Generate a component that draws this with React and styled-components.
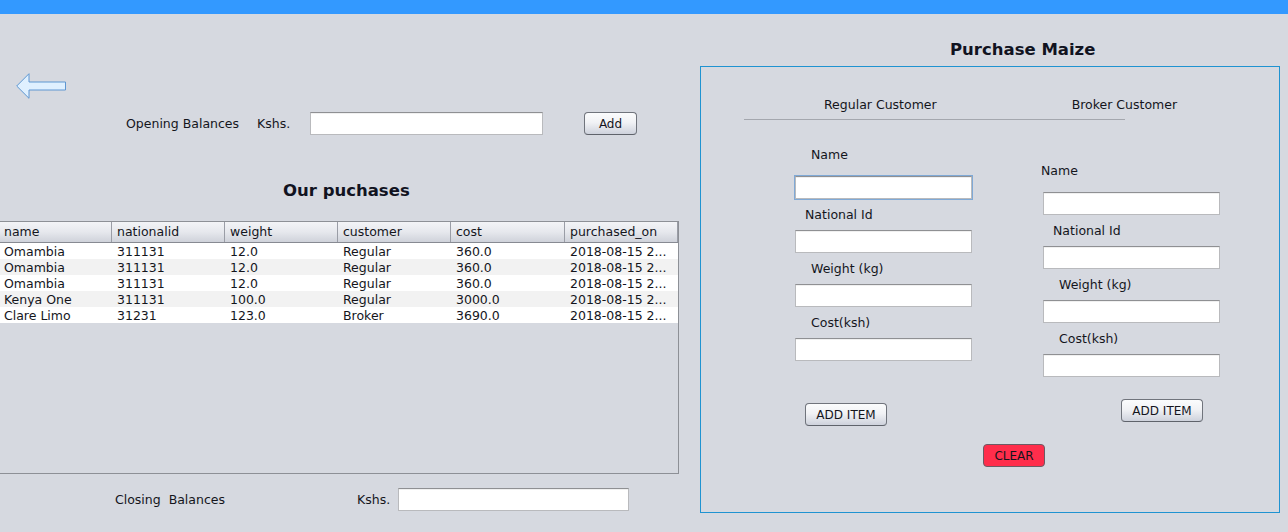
import React from 'react';
import styled, { createGlobalStyle } from 'styled-components';

const GlobalStyle = createGlobalStyle`
  html, body {
    margin: 0;
    height: 100%;
    overflow: hidden;
    background: #d6d9e0;
    font-family: "DejaVu Sans", sans-serif;
    font-size: 12.5px;
    color: #14151c;
  }
`;

const TopBar = styled.div`
  height: 14px;
  background: #3399ff;
`;

const Page = styled.div`
  display: flex;
  width: 1288px;
  height: 518px;
  overflow: hidden;
`;

const LeftColumn = styled.div`
  width: 700px;
  flex: none;
`;

const RightColumn = styled.div`
  width: 580px;
  flex: none;
`;

const BackArrow = styled.svg`
  display: block;
  width: 50px;
  height: 26px;
  margin: 59px 0 13px 16px;
`;

const BalanceRow = styled.div`
  display: flex;
  align-items: center;
  height: 23px;
  padding-left: ${(p) => p.$indent}px;
`;

const Text = styled.span`
  width: ${(p) => p.$width}px;
  flex: none;
  white-space: nowrap;
`;

const TextInput = styled.input`
  display: block;
  box-sizing: border-box;
  width: ${(p) => p.$width || 177}px;
  height: 23px;
  flex: none;
  padding: 0;
  background: #fff;
  border: 1px solid #b9babd;
  border-top-color: #8f9093;
  border-radius: 0;
  outline: ${(p) => (p.$focused ? '1px solid #7fa9d6' : 'none')};
  outline-offset: 0;
  box-shadow: inset 0 1px 0 #f0f0f0;
`;

const Button = styled.button`
  display: block;
  box-sizing: border-box;
  width: ${(p) => p.$width}px;
  height: 23px;
  flex: none;
  padding: 0;
  border: 1px solid #70747c;
  border-bottom-color: #5f636b;
  border-radius: 4px;
  background: linear-gradient(#fbfcfd, #f1f2f5 45%, #ced2dc);
  font: inherit;
  font-size: 12px;
  color: #14151c;
`;

const AddButton = styled(Button)`
  margin-left: 41px;
`;

const ItemButton = styled(Button)`
  margin: ${(p) => p.$top}px 0 0 ${(p) => p.$left}px;
`;

const ClearButton = styled(Button)`
  margin: 18px 0 0 282px;
  background: #ff2d4b;
  border-color: #6d5a64;
`;

const Heading = styled.h2`
  margin: 0;
  font-size: 16.5px;
  line-height: 20px;
  font-weight: bold;
  color: #11131f;
  white-space: nowrap;
`;

const TableHeading = styled(Heading)`
  margin: 46px 0 20px 283px;
`;

const PanelHeading = styled(Heading)`
  margin: 26px 0 6px 250px;
`;

const TableBox = styled.div`
  box-sizing: border-box;
  width: 680px;
  height: 253px;
  margin: 0 0 14px -1px;
  border: 1px solid #8d9096;
`;

const columns = '112px 113px 113px 113px 114px 113px';

const HeaderRow = styled.div`
  display: grid;
  grid-template-columns: ${columns};
  height: 20px;
  border-bottom: 1px solid #878a92;
  background: linear-gradient(#f3f4f7, #e6e8ed 50%, #cfd2da);
`;

const HeaderCell = styled.div`
  padding-left: 5px;
  line-height: 19px;
  border-right: 1px solid #9a9da6;
  white-space: nowrap;

  &:first-child {
    padding-left: 4px;
  }
`;

const DataRow = styled.div`
  display: grid;
  grid-template-columns: ${columns};
  height: 16px;
  background: ${(p) => (p.$alt ? '#f2f2f2' : '#fff')};
`;

const DataCell = styled.div`
  padding-left: 5px;
  line-height: 18px;
  height: 16px;
  white-space: nowrap;

  &:first-child {
    padding-left: 4px;
  }
`;

const Panel = styled.div`
  box-sizing: border-box;
  width: 580px;
  height: 447px;
  border: 1px solid #1f93d1;
`;

const Tabs = styled.div`
  display: flex;
  gap: 135px;
  box-sizing: border-box;
  width: 381px;
  height: 53px;
  margin-left: 43px;
  padding: 30px 0 0 80px;
  line-height: 16px;
  border-bottom: 1px solid #a4a7ae;
  white-space: nowrap;
`;

const Forms = styled.div`
  display: flex;
  gap: 71px;
  margin: 0 0 0 94px;
`;

const FormColumn = styled.div`
  width: 177px;
  padding-top: ${(p) => p.$top}px;
`;

const FieldLabel = styled.label`
  display: block;
  box-sizing: border-box;
  height: 31px;
  margin-left: ${(p) => p.$indent}px;
  padding-top: ${(p) => p.$pad}px;
  line-height: 16px;
  white-space: nowrap;
`;

const rows = [
  ['Omambia', '311131', '12.0', 'Regular', '360.0'],
  ['Omambia', '311131', '12.0', 'Regular', '360.0'],
  ['Omambia', '311131', '12.0', 'Regular', '360.0'],
  ['Kenya One', '311131', '100.0', 'Regular', '3000.0'],
  ['Clare Limo', '31231', '123.0', 'Broker', '3690.0'],
];

const headers = ['name', 'nationalid', 'weight', 'customer', 'cost', 'purchased_on'];

function Field({ label, indent, pad = 8, focused }) {
  return (
    <div>
      <FieldLabel $indent={indent} $pad={pad}>{label}</FieldLabel>
      <TextInput $focused={focused} readOnly />
    </div>
  );
}

function App() {
  return (
    <>
      <GlobalStyle />
      <TopBar />
      <Page>
        <LeftColumn>
          <BackArrow viewBox="0 0 50 26">
            <polygon
              points="0.7,13 13,0.7 13,9 49.5,9 49.5,17 13,17 13,25.3"
              fill="#dff0ff"
              stroke="#5e97d2"
              strokeWidth="1"
            />
          </BackArrow>
          <BalanceRow $indent={126}>
            <Text $width={131}>Opening Balances</Text>
            <Text $width={53}>Kshs.</Text>
            <TextInput $width={233} readOnly />
            <AddButton $width={53}>Add</AddButton>
          </BalanceRow>
          <TableHeading>Our puchases</TableHeading>
          <TableBox>
            <HeaderRow>
              {headers.map((h) => <HeaderCell key={h}>{h}</HeaderCell>)}
            </HeaderRow>
            {rows.map((row, i) => (
              <DataRow key={i} $alt={i % 2 === 1}>
                {row.map((cell, j) => <DataCell key={j}>{cell}</DataCell>)}
                <DataCell>2018-08-15 2...</DataCell>
              </DataRow>
            ))}
          </TableBox>
          <BalanceRow $indent={115}>
            <Text $width={242}>Closing&nbsp; Balances</Text>
            <Text $width={41}>Kshs.</Text>
            <TextInput $width={231} readOnly />
          </BalanceRow>
        </LeftColumn>
        <RightColumn>
          <PanelHeading>Purchase Maize</PanelHeading>
          <Panel>
            <Tabs>
              <span>Regular Customer</span>
              <span>Broker Customer</span>
            </Tabs>
            <Forms>
              <FormColumn $top={25}>
                <Field label="Name" indent={16} pad={2} focused />
                <Field label="National Id" indent={10} />
                <Field label="Weight (kg)" indent={16} />
                <Field label="Cost(ksh)" indent={16} />
                <ItemButton $width={82} $top={42} $left={10}>ADD ITEM</ItemButton>
              </FormColumn>
              <FormColumn $top={41}>
                <Field label="Name" indent={-2} pad={2} />
                <Field label="National Id" indent={10} />
                <Field label="Weight (kg)" indent={16} />
                <Field label="Cost(ksh)" indent={16} />
                <ItemButton $width={82} $top={22} $left={78}>ADD ITEM</ItemButton>
              </FormColumn>
            </Forms>
            <ClearButton $width={62}>CLEAR</ClearButton>
          </Panel>
        </RightColumn>
      </Page>
    </>
  );
}

export default App;
